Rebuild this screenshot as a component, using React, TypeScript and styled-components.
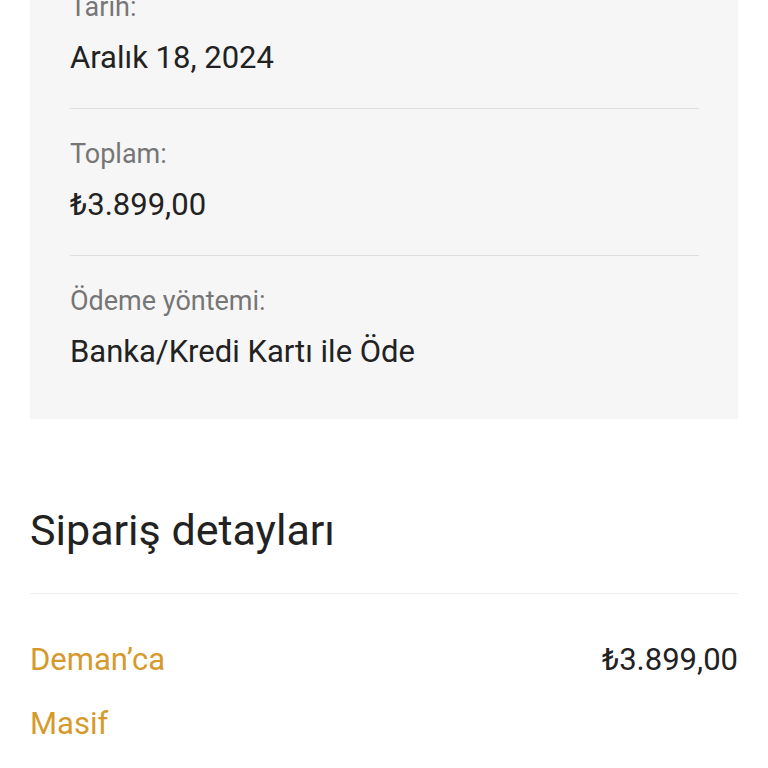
import React from "react";
import styled, { createGlobalStyle } from "styled-components";

const GlobalStyle = createGlobalStyle`
  body {
    margin: 0;
    background: #ffffff;
    font-family: Roboto, "Noto Sans", "Liberation Sans", sans-serif;
    color: #222222;
  }
`;

// the page is scrolled: the top of the summary box sits above the viewport
const Page = styled.div`
  padding: 0 30px;
  margin-top: -38px;
`;

const SummaryBox = styled.ul`
  list-style: none;
  margin: 0;
  padding: 0 39px 17px 40px;
  background: #f6f6f6;
`;

const SummaryItem = styled.li`
  padding: 27px 0 30px;
  border-bottom: 1px solid #dedede;

  &:last-child {
    border-bottom: none;
  }
`;

const Label = styled.div`
  font-size: 27px;
  line-height: 36px;
  color: #767676;
`;

const Value = styled.div`
  margin-top: 13px;
  font-size: 31px;
  line-height: 40px;
  color: #222222;
`;

const SectionTitle = styled.h2`
  margin: 85px 0 0;
  padding-bottom: 37px;
  border-bottom: 1px solid #eeeeee;
  font-size: 43px;
  line-height: 52px;
  font-weight: 400;
  color: #222222;
`;

const ProductRow = styled.div`
  display: flex;
  justify-content: space-between;
  align-items: flex-start;
  padding-top: 46px;
`;

const ProductName = styled.a`
  max-width: 170px;
  font-size: 31px;
  line-height: 64px;
  margin-top: -12px;
  color: #d69a2c;
  text-decoration: none;
`;

const ProductPrice = styled.span`
  font-size: 31px;
  line-height: 40px;
  color: #222222;
`;

const summary = [
  { label: "Tarih:", value: "Aralık 18, 2024" },
  { label: "Toplam:", value: "₺3.899,00" },
  { label: "Ödeme yöntemi:", value: "Banka/Kredi Kartı ile Öde" },
];

const App: React.FC = () => {
  return (
    <>
      <GlobalStyle />
      <Page>
        <SummaryBox>
          {summary.map((item) => (
            <SummaryItem key={item.label}>
              <Label>{item.label}</Label>
              <Value>{item.value}</Value>
            </SummaryItem>
          ))}
        </SummaryBox>

        <SectionTitle>Sipariş detayları</SectionTitle>

        <ProductRow>
          <ProductName href="#">Deman’ca Masif Sehpa</ProductName>
          <ProductPrice>₺3.899,00</ProductPrice>
        </ProductRow>
      </Page>
    </>
  );
};

export default App;
